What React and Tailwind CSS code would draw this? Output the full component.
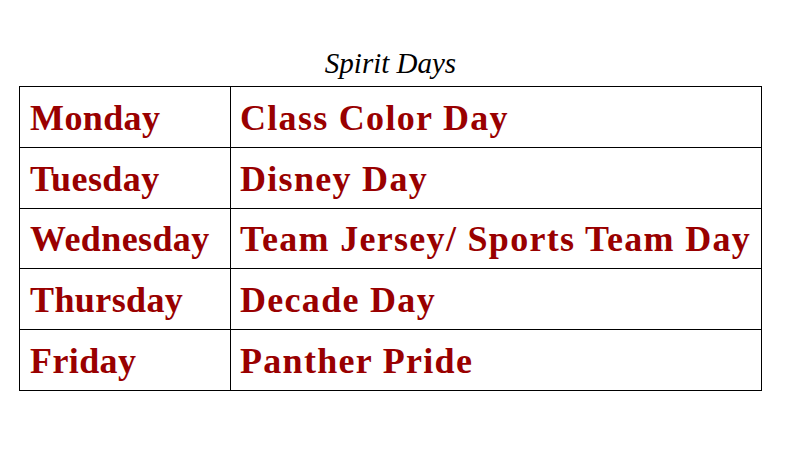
const days = [
  { day: "Monday", theme: "Class Color Day" },
  { day: "Tuesday", theme: "Disney Day" },
  { day: "Wednesday", theme: "Team Jersey/ Sports Team Day" },
  { day: "Thursday", theme: "Decade Day" },
  { day: "Friday", theme: "Panther Pride" },
]

export default function App() {
  return (
    <div className="min-h-[471px] w-[796px] bg-white pt-[44px]">
      <h1 className="ml-[19px] w-[743px] text-center text-[29px] italic leading-[38px] text-black [font-family:'Liberation_Serif',serif]">
        Spirit Days
      </h1>
      <table className="ml-[19px] mt-[4px] w-[743px] border-collapse [font-family:'Liberation_Serif',serif]">
        <tbody>
          {days.map((row) => (
            <tr key={row.day} className="h-[60.8px]">
              <td className="w-[211px] border border-black pl-[10px] pt-[2px] text-[36px] font-bold tracking-[0.4px] text-[#990000]">
                {row.day}
              </td>
              <td className="border border-black pl-[9px] pt-[2px] text-[36px] font-bold tracking-[1.3px] text-[#990000]">
                {row.theme}
              </td>
            </tr>
          ))}
        </tbody>
      </table>
    </div>
  )
}
